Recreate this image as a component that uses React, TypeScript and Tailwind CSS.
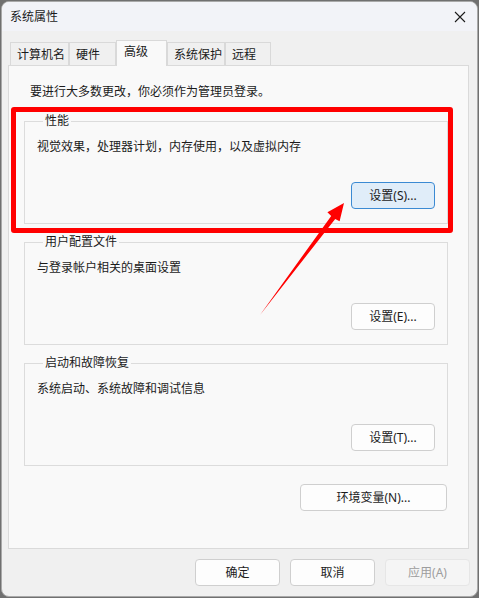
import React from 'react';

const font = { fontFamily: '"Noto Sans", "Noto Sans CJK SC", sans-serif' };

type BtnProps = { children: React.ReactNode; className?: string; primary?: boolean; disabled?: boolean };

const Btn: React.FC<BtnProps> = ({ children, className = 'w-[84px]', primary, disabled }) => {
  let look = 'bg-[#fdfdfd] border-[#cfcfcf] text-[#1b1b1b]';
  if (primary) look = 'bg-[#e0edf9] border-[#3b8ad3] text-[#1b1b1b]';
  if (disabled) look = 'bg-[#f5f5f5] border-[#e6e6e6] text-[#9d9d9d]';
  return (
    <button className={`${className} h-[27px] rounded-[4px] border text-[12px] leading-[16px] flex items-center justify-center ${look}`}>
      {children}
    </button>
  );
};

type GroupProps = { title: string; text: string; button: string; primary?: boolean; className?: string };

const Group: React.FC<GroupProps> = ({ title, text, button, primary, className = '' }) => (
  <fieldset className={`ml-[15px] w-[424px] border border-[#dcdcdc] pl-[12px] pr-[12px] pb-[14px] ${className}`}>
    <legend className="ml-[6px] px-[2px] text-[12px] leading-[16px]">{title}</legend>
    <p className="mt-[10px] text-[12px] leading-[16px]">{text}</p>
    <div className="mt-[27px] flex justify-end">
      <Btn primary={primary}>{button}</Btn>
    </div>
  </fieldset>
);

const tabs = [
  { label: '计算机名', w: 'w-[59px]' },
  { label: '硬件', w: 'w-[47px]' },
  { label: '高级', w: 'w-[51px]', active: true },
  { label: '系统保护', w: 'w-[58px]' },
  { label: '远程', w: 'w-[46px]' },
];

const App: React.FC = () => {
  return (
    <div className="relative w-[479px] h-[598px] bg-[#707070] overflow-hidden text-[#1b1b1b]" style={font}>
      <div className="ml-px mt-px w-[477px] h-[596px] rounded-[8px] border border-[#a9a9a9] bg-[#f0f0f0] overflow-hidden flex flex-col">
        {/* Title bar */}
        <div className="h-[29px] bg-[#f2f3f8] flex items-center justify-between pl-[8px] pr-[9px]">
          <span className="text-[12px] leading-[16px]">系统属性</span>
          <svg width="12" height="12" viewBox="0 0 12 12" className="mr-[2px]">
            <path d="M1 1 L11 11 M11 1 L1 11" stroke="#1b1b1b" strokeWidth="1.1" fill="none" />
          </svg>
        </div>

        <div className="pl-[6px] pr-[6px] flex flex-col">
          {/* Tabs */}
          <div className="mt-[9px] ml-[2px] h-[25px] flex items-end">
            {tabs.map((t) =>
              t.active ? (
                <div
                  key={t.label}
                  className={`${t.w} relative z-10 -mb-px h-[26px] border border-b-0 border-[#d9d9d9] bg-[#f9f9f9] pl-[7px] pt-[3px] text-[12px] leading-[16px]`}
                >
                  {t.label}
                </div>
              ) : (
                <div
                  key={t.label}
                  className={`${t.w} h-[23px] border border-b-0 border-[#d9d9d9] bg-[#f0f0f0] pl-[6px] pt-[4px] text-[12px] leading-[16px]`}
                >
                  {t.label}
                </div>
              )
            )}
          </div>

          {/* Tab panel */}
          <div className="w-[461px] h-[484px] border border-[#dadada] bg-[#f9f9f9] pt-[18px]">
            <p className="pl-[21px] text-[12px] leading-[16px]">要进行大多数更改，你必须作为管理员登录。</p>
            <Group
              className="mt-[13px]"
              title="性能"
              text="视觉效果，处理器计划，内存使用，以及虚拟内存"
              button="设置(S)..."
              primary
            />
            <Group className="mt-[10px]" title="用户配置文件" text="与登录帐户相关的桌面设置" button="设置(E)..." />
            <Group className="mt-[10px]" title="启动和故障恢复" text="系统启动、系统故障和调试信息" button="设置(T)..." />
            <div className="ml-[15px] w-[423px] mt-[18px] flex justify-end">
              <Btn className="w-[147px]">环境变量(N)...</Btn>
            </div>
          </div>

          {/* Dialog buttons */}
          <div className="mt-[10px] flex justify-end gap-[10px] pr-px">
            <Btn className="w-[85px]">确定</Btn>
            <Btn className="w-[85px]">取消</Btn>
            <Btn className="w-[85px]" disabled>应用(A)</Btn>
          </div>
        </div>
      </div>

      {/* Annotation: red highlight box */}
      <div className="absolute left-[11px] top-[107px] w-[442px] h-[126px] border-[5px] border-[#ff0000] rounded-[3px] pointer-events-none" />

      {/* Annotation: red arrow */}
      <svg className="absolute left-0 top-0 pointer-events-none" width="479" height="598" viewBox="0 0 479 598">
        <polygon
          points="260,315 331.2,215.9 327.4,212.2 344,203 339.6,221.2 335.2,218.9"
          fill="#ff0000"
        />
      </svg>
    </div>
  );
};

export default App;
